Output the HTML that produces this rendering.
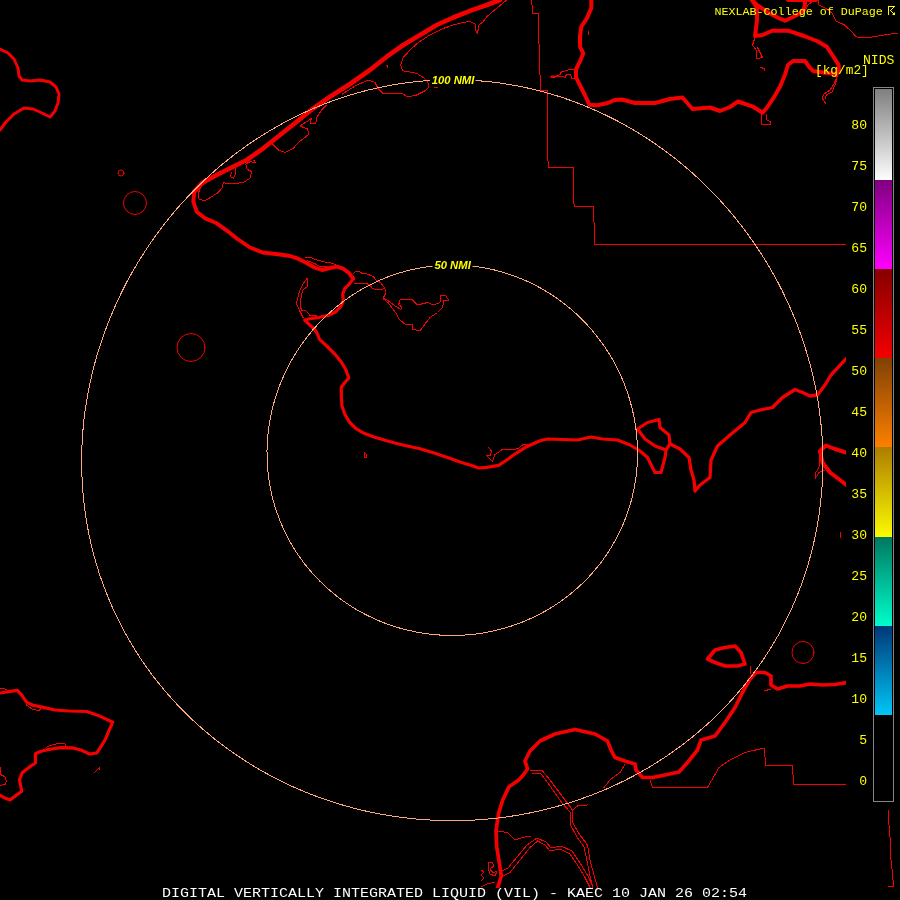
<!DOCTYPE html>
<html><head><meta charset="utf-8"><title>NEXLAB VIL KAEC</title>
<style>
html,body{margin:0;padding:0;background:#000;}
body{width:900px;height:900px;overflow:hidden;position:relative;}
svg{position:absolute;left:0;top:0;display:block;}
</style></head><body>
<svg width="900" height="900" viewBox="0 0 900 900">
<defs>
<clipPath id="mapclip"><path d="M0,0H900V50H846V808H900V888H0Z"/></clipPath>

<linearGradient id="g0" x1="0" y1="0" x2="0" y2="1"><stop offset="0" stop-color="rgb(128,128,128)"/><stop offset="1" stop-color="rgb(255,255,255)"/></linearGradient>
<linearGradient id="g1" x1="0" y1="0" x2="0" y2="1"><stop offset="0" stop-color="rgb(128,0,128)"/><stop offset="1" stop-color="rgb(255,0,255)"/></linearGradient>
<linearGradient id="g2" x1="0" y1="0" x2="0" y2="1"><stop offset="0" stop-color="rgb(134,0,0)"/><stop offset="1" stop-color="rgb(244,0,0)"/></linearGradient>
<linearGradient id="g3" x1="0" y1="0" x2="0" y2="1"><stop offset="0" stop-color="rgb(128,66,6)"/><stop offset="1" stop-color="rgb(255,128,0)"/></linearGradient>
<linearGradient id="g4" x1="0" y1="0" x2="0" y2="1"><stop offset="0" stop-color="rgb(174,126,0)"/><stop offset="1" stop-color="rgb(252,252,0)"/></linearGradient>
<linearGradient id="g5" x1="0" y1="0" x2="0" y2="1"><stop offset="0" stop-color="rgb(0,120,96)"/><stop offset="1" stop-color="rgb(0,255,204)"/></linearGradient>
<linearGradient id="g6" x1="0" y1="0" x2="0" y2="1"><stop offset="0" stop-color="rgb(0,56,120)"/><stop offset="1" stop-color="rgb(0,200,248)"/></linearGradient>
</defs>
<rect width="900" height="900" fill="#000"/>
<g clip-path="url(#mapclip)" fill="none" stroke="#f40000" stroke-linejoin="round" stroke-linecap="round">
<polyline stroke-width="3" points="0,49 8,53 14,59 18,68 19,76 22,80 30,81 40,80 50,82 56,87 59,94 58,103 55,111 50,117 42,113 33,109 24,108 14,114 6,122 0,130"/>
<polyline stroke-width="3.2" points="353.3,278.7 348.7,284.7 344.7,288.7 342.7,294 343.3,300.7 340.7,306.7 335.3,312 328.7,315.3 319.3,317.3 310,318.7 304.7,320 308.7,324 314,328.7 317,333 319.5,339.3 326.7,346 334.7,354 341.3,362 346,370 348.7,378 345.3,382 341.3,387.3 341.3,396.7 342,406 344.7,414 349.3,422 356,428.7 364,433.3 374.7,437.3 386.7,440.7 398.7,444 410.7,446.7 420,448.7 433.3,452.7 446.7,457.3 460,462 470.7,465.3 478.7,468 486.7,467.3 498.7,465.3 506.7,460 516,453.3 526.7,446.7 540,440.7 547.5,439 562.5,439.5 577.5,440 591,437 602.5,439 617.5,440 630,445 640,451 647.5,457.5 655,472.5 661,472.5 665,457.5 666,450 655,446 645,439 637.5,429 647.5,422.5 659,419.5 660,427.5 669,435 670,444 666,450"/>
<polyline stroke-width="3.3" points="670,444 680,449 689,457.5 691,470 694,480 695,491 700,485 710,477.5 711,460 717.5,446 730,435 745,422.5 751,412.5 760,410 772.5,407.5 782.5,397.5 795,389.5 802.5,392.5 810,396 817.5,395 825,385 831,375 845,360 850,355"/>
<polyline stroke-width="4" points="591.3,0 591.3,8 586.7,18.7 581.3,26.7 580,36 580,46.7 583.3,53.3 580,61.3 576,69.3 576,77.3 580,85.3 585.3,96 589.3,104.7 597.3,105.3 606.7,103.3 614.7,100 622,99.5 635,103 655,103 670,99 682.5,97.5 692.5,109 710,107.5 720,111 730,107 738,101.5 753,106.7 762.7,112.7 766.7,108 773,98.7 780,86.7 785,74.7 788,65 793,61 805,61 809,66.7 813,71 825,72.7 836,74 839,72 838.7,65 833,56 826.7,46.7 817,41 804,36 788,30.7 772,30.7 762.7,35 755,36 757,20 757,8 752,0"/>
<polyline stroke-width="2.5" points="551.5,76.7 554.5,76.7"/>
<polyline stroke-width="4" points="752,0 757,5 769,13 780,18.7 785,20.7 793,17 802.7,12 805,5 805,1"/>
<polyline stroke-width="4" points="788,0 816,0"/>
<polyline stroke-width="4" points="850,453 846,452.5 835,449 826,445.5 820,451 822.5,462.5 830,472.5 840,480 850,488"/>
<polyline stroke-width="3.2" points="0,693 8.7,691.6 17.3,690.4 21.7,695.2 26.7,702.4 33.2,705.3 43.3,707.4 54.9,710 69.3,711 86.7,711.5 98.2,715.4 112.7,722.2 109,730.6 105.4,739.2 101.1,746.4 96.8,753 89.6,754 80.9,750 72.2,747.9 60.7,747.6 49.1,749.3 40.4,751.5 35.4,753.7 35.4,763 28.9,767.4 22.4,772.4 19.5,779.7 21.7,791.2 15.9,795.6 10.1,799.9 4.3,797.7 -1,794.8"/>
<polyline stroke-width="3.7" points="497,892 497.5,888 501.3,876 499.3,862.7 496.7,846.7 496,830.7 498.7,813 502.7,800 509,786.7 518.7,780 522.5,776 527.5,769 525,761 530,751 540,741 555,734 575,729.5 595,734 607.5,741 611,750 615,757.5 625,761 635,764 636,770 642.5,777.5 652.5,777.5 665,775 679,772 687.5,762.5 697.5,750 701,740 715,736 725,722.5 735,707.5 742.5,692.5 750,679 756,672.5 765,672.5 771,676 771,685 777.5,689 787.5,686 800,686 810,684 822.5,685 835,684.5 850,682"/>
<polyline stroke-width="3.7" points="707.5,659 715,650 725,647.5 735,646 741,652.5 745,664 737.5,666 725,666 715,662.5 707.5,659"/>
<polyline stroke-width="3.9" points="194.2,191.7 193.3,201.7 196.7,211.7 205,218.3 216.7,223.3 228.3,231.7 237.5,239 250,247.5 262.5,252.5 280,254.5 290,256 298,258.7 306,262.7 314,267.3 322,270 330,268 336.7,266.7 343.3,268.7 348.7,272.7 353.3,278.7"/>
<g stroke-width="4.6">
<polyline points="500,0 486.7,5 470,10.8 453.3,17.5 436.7,25 420,35 403.3,45 386.7,56.7 370,70 350,84 330,96.7 313.3,108.3 296.7,121.7 280,135 263.3,148.3 246.7,160 230,168.3 213.3,176.7 201.7,183.3 194.2,191.7"/>
</g>
<g stroke-width="1" shape-rendering="crispEdges">
<polyline points="531.5,0 531.5,5 532.5,5 532.5,13.5 538.5,13.5 538.5,44 539.5,44 539.5,75 540.5,75 540.5,90.5 547.5,90.5 547.5,161 548.5,161 548.5,167.5 573.5,167.5 573.5,204 574.5,204 574.5,206.5 593.5,206.5 593.5,222 594.5,222 594.5,244.5 850,244.5"/>
<polyline points="650,780 652.5,787.5 707.5,787.5 719,767.5 730,760 745,752.5 764,748 766,765.5 792.5,765.5 793.5,784.5 850,784.5"/>
<polyline points="813,1 808,5 805,10.7"/>
<polyline points="818.7,0 818.7,5 825,8 832,13 836,21 844,24.7 850.7,30.7 856,36.7 862,38 872,37 884,35 898,33"/>
<polyline points="201.7,185 198.3,193.3 199,199 205,200.8 211.7,196.7 218.3,192.5 222.5,187.5 223.3,182.5 228.3,184 236.7,183.3 243.3,182.5 250,178.3 251.7,171.7 246.7,169 245.8,164 250,161.7 255.8,162.5 253.3,160"/>
<polyline points="235,168.3 235.8,173.3 233.3,178.3 230,176.7 231.7,172.5"/>
<polyline points="272.5,144 278.3,150 285,152.5 293.3,148.3 298.3,142.5 305,137.5 309,134 307.5,129 300,126 306.7,121.7 311.7,118.3 310,123.3 315.8,124 316.7,117.5 321.7,110 326.7,105"/>
<polyline points="506.7,0 496.7,8.3 486.7,16.7 483.3,21.7 479,25 477.5,33.3 475,29 475,24 470,21.3 463.3,22.5 453.3,25 441.7,29 428.3,36 418.3,42.5 410,50 403.3,57.5 400.8,65 402.5,70.8 408.3,71.7 416.7,73.3 423.3,77.5 427.5,81.7 429,86.7 425,90.8 420,93.3 415,95.8 406.7,96.3 401.7,93.3 393.3,93.7 383.3,94 378.3,89 375,82.5 368,80 355,86 342.5,94"/>
<polyline points="386.7,65 388,67.5"/>
<polyline points="434,87.5 437.5,87.5"/>
<polyline points="353.3,274 355.3,271.3 359.3,271.3 362,273.3 367.3,274 373.3,276.7 376,280 380.7,282.7 384.7,288 386,292.7 383.3,298 387.3,300 391.3,303.3 395.3,306 400.7,309.3 402,307.3 398.7,304.7 400,300 404.7,299 412.5,300 417.5,305 427.5,302.5 434,305 440,302.5 441,295 446,296 449,301 444,300 442.5,307.5 437.5,312.5 430,317.5 425,324 420,331 412.5,329 412.5,325 404.7,324 399.3,319.3 396.7,314 392.7,308.7 388.7,303.3 383.3,298.7"/>
<polyline points="307.3,278 303.3,283.3 300,290 298,296.7 296.4,303.3 299.3,310 303.3,318"/>
<polyline points="308,279.3 307.3,286.7 302.7,290 301.3,296.7 300,303.3 301.3,310 306,310.7 310,315.3 316.7,316"/>
<polyline points="304.7,258 310,257.3 316.7,260 324.7,262 330,262.7 334,264 337,266"/>
<polyline points="307.3,260.7 314,263.3 320.7,266.7 327.3,266.7"/>
<polyline points="354,283.3 359.3,284 366,283.3 370,285.3 372.7,288.7 378,290 384,288.7"/>
<polyline points="364,452 366,454 366,458 364,457 364,452"/>
<polyline points="488,446.7 491.3,450.7 490.7,456 486.7,455.3 489.3,458.7 492.7,461.3 494.7,454.7 502.7,449.3 513.3,450 518.7,448 522.7,444.7 529.3,444"/>
<polyline points="755,37.5 752.5,45 756,50 756,59 762.5,57.5 757.5,47.5"/>
<polyline points="760,67 765,69 764,71"/>
<polyline points="838,74 834,84 830,90 824,94 822,98 826,104"/>
<polyline points="837,78.7 835,85 832,92 826.7,94.7 825,98.7"/>
<polyline points="762,114 761,124 770,125 771,122 767,120 766,114"/>
<polyline points="820,455 819,467.5 815,474 815,479 819,472.5 825,470"/>
<polyline points="840,532 840,538"/>
<polyline points="0,766.7 0.7,774.6 5,776.8 6.5,781.1 5,784.7 0,785.2"/>
<polyline points="94.6,772.4 99.7,767.4 99.7,769.5"/>
<polyline points="530,770 542.5,771 550,780 557.5,790 565,800 572.5,810 572.5,822.5 580,835 587.5,845 590,860 594,875 597.5,887.5"/>
<polyline points="532,773 541,774 548,783 555,793 562,803 570,812 570,824 577,837 584,847 587,861 590,876 593,888"/>
<polyline points="572.5,810 577.5,806 587.5,805"/>
<polyline points="500,877.5 510,872.5 520,860 530,847.5 537.5,841 545,845 550,851 560,849 570,854 577.5,865 585,877.5 590,887.5"/>
<polyline points="500,872 508,868 517,857 527,845 537,838 546,842 551,848 561,846 572,851 580,863 588,876 593,887"/>
<polyline points="497.5,831 507.5,832.5 515,840 522.5,837.5 531,836"/>
<polyline points="625,764 620,772.5 610,780 604,787.5"/>
<polyline points="764,691 771,689"/>
<polyline points="750,666 751,674"/>
<polyline points="555,76.5 560,74.7 561.3,72 568,70 574,69.3"/>
<polyline points="555,77 560,76 565.3,77.3 566.7,74 570.7,74.7 572,78.7 575.3,78"/>
<polyline points="588,30.7 588,34.7"/>
<polyline points="488,863 492,862 494,866 490,869 493,873 497,871 495,876 490,874 488,868 488,863"/>
<polyline points="481,870 484,872 481,875 484,878 481,881"/>
<polyline points="481,887 487,884 495,882"/>
<polyline points="46.2,747.2 53.4,744.3 62.1,743.3 65.7,744.3 65.7,747.2"/>
<polyline points="26,704.6 31.8,708.9 39,711 40.4,708.9"/>
<polyline points="0,689 4,688.5 7,690"/>
</g>
<g stroke-width="1">
<circle cx="121" cy="173" r="3"/>
<circle cx="135" cy="203" r="11.5"/>
<circle cx="191" cy="347.5" r="14"/>
<circle cx="803" cy="652.5" r="11"/>
</g>
</g>
<g fill="none" stroke="#f40000" stroke-width="1" shape-rendering="crispEdges">
<polyline points="888,810 889,825 890.5,842.5 891,860 892.5,873 893.5,886 888,887"/>
</g>
<g fill="none" stroke="#ffa87e" stroke-width="1" shape-rendering="crispEdges">
<polygon points="452.3,79.8 461.7,79.9 471.1,80.3 480.4,80.9 489.8,81.8 499.1,82.9 508.4,84.3 517.7,86 527,87.9 536.1,90 545.3,92.4 554.4,95 563.4,97.9 572.3,101 581.2,104.4 590,108 598.7,111.8 607.3,115.9 615.8,120.1 624.2,124.7 632.5,129.4 640.7,134.4 648.8,139.5 656.7,144.9 664.6,150.5 672.3,156.3 679.8,162.3 687.2,168.5 694.5,174.9 701.5,181.5 708.5,188.3 715.3,195.2 721.9,202.3 728.3,209.6 734.6,217.1 740.6,224.7 746.5,232.5 752.2,240.4 757.7,248.5 763,256.7 768.1,265 773,273.5 777.7,282 782.2,290.7 786.4,299.6 790.5,308.5 794.3,317.5 797.9,326.6 801.2,335.8 804.3,345 807.2,354.3 809.9,363.7 812.3,373.2 814.5,382.7 816.4,392.3 818.1,401.9 819.5,411.5 820.7,421.2 821.6,430.8 822.3,440.5 822.7,450.2 822.9,459.9 822.8,469.6 822.5,479.3 821.9,489 821,498.6 819.9,508.2 818.6,517.7 817,527.3 815.1,536.7 813,546.1 810.6,555.4 808,564.7 805.1,573.9 802,583 798.6,592 795,600.9 791.1,609.7 787,618.4 782.6,627 778.1,635.5 773.3,643.8 768.2,652 762.9,660.1 757.4,668 751.7,675.8 745.8,683.4 739.6,690.8 733.3,698.1 726.7,705.2 720,712.2 713,719 705.9,725.5 698.5,731.9 691,738.1 683.3,744.1 675.5,749.9 667.5,755.5 659.3,760.9 650.9,766.1 642.5,771.1 633.8,775.8 625.1,780.3 616.2,784.6 607.2,788.7 598.1,792.5 588.9,796.1 579.5,799.4 570.1,802.6 560.6,805.4 551,808.1 541.4,810.5 531.6,812.6 521.8,814.5 512,816.1 502.1,817.5 492.2,818.7 482.2,819.5 472.3,820.2 462.3,820.6 452.3,820.7 442.3,820.6 432.3,820.2 422.3,819.5 412.4,818.7 402.4,817.5 392.5,816.1 382.7,814.5 372.9,812.6 363.2,810.5 353.5,808.1 343.9,805.4 334.4,802.6 325,799.4 315.7,796.1 306.4,792.5 297.3,788.7 288.3,784.6 279.4,780.3 270.7,775.8 262.1,771.1 253.6,766.1 245.3,760.9 237.1,755.5 229.1,749.9 221.2,744.1 213.5,738.1 206,731.9 198.7,725.5 191.5,719 184.6,712.2 177.8,705.2 171.3,698.1 164.9,690.8 158.8,683.4 152.8,675.8 147.1,668 141.6,660.1 136.3,652 131.3,643.8 126.5,635.5 121.9,627 117.5,618.4 113.4,609.7 109.6,600.9 106,592 102.6,583 99.4,573.9 96.6,564.7 93.9,555.4 91.6,546.1 89.4,536.7 87.6,527.3 86,517.7 84.6,508.2 83.5,498.6 82.6,489 82.1,479.3 81.7,469.6 81.6,459.9 81.8,450.2 82.2,440.5 82.9,430.8 83.8,421.2 85,411.5 86.5,401.9 88.1,392.3 90.1,382.7 92.2,373.2 94.7,363.7 97.3,354.3 100.2,345 103.3,335.8 106.7,326.6 110.3,317.5 114.1,308.5 118.1,299.6 122.4,290.7 126.8,282 131.5,273.5 136.4,265 141.5,256.7 146.8,248.5 152.3,240.4 158,232.5 163.9,224.7 170,217.1 176.2,209.6 182.7,202.3 189.3,195.2 196.1,188.3 203,181.5 210.1,174.9 217.3,168.5 224.7,162.3 232.3,156.3 240,150.5 247.8,144.9 255.7,139.5 263.8,134.4 272,129.4 280.3,124.7 288.7,120.1 297.2,115.9 305.9,111.8 314.6,108 323.3,104.4 332.2,101 341.2,97.9 350.2,95 359.3,92.4 368.4,90 377.6,87.9 386.8,86 396.1,84.3 405.4,82.9 414.7,81.8 424.1,80.9 433.5,80.3 442.9,79.9"/>
<polygon points="452.3,265 459.4,265.1 466.6,265.6 473.7,266.3 480.8,267.3 487.9,268.6 494.9,270.1 501.8,272 508.7,274.1 515.4,276.4 522.1,279.1 528.7,282 535.2,285.2 541.6,288.6 547.8,292.3 553.9,296.2 559.8,300.4 565.6,304.8 571.2,309.4 576.6,314.2 581.8,319.3 586.9,324.5 591.7,329.9 596.3,335.6 600.8,341.4 605,347.3 608.9,353.4 612.7,359.7 616.2,366.1 619.4,372.7 622.4,379.3 625.1,386.1 627.6,393 629.8,400 631.7,407 633.4,414.1 634.8,421.3 635.9,428.5 636.7,435.7 637.2,443 637.5,450.2 637.5,457.5 637.2,464.8 636.6,472 635.7,479.2 634.5,486.4 633,493.5 631.3,500.5 629.3,507.5 627,514.3 624.4,521.1 621.6,527.8 618.5,534.3 615.1,540.7 611.5,547 607.6,553.1 603.5,559.1 599.1,564.9 594.5,570.5 589.7,576 584.7,581.2 579.4,586.2 574,591.1 568.3,595.7 562.5,600.1 556.5,604.2 550.3,608.2 544,611.8 537.5,615.3 530.9,618.4 524.2,621.4 517.3,624 510.4,626.4 503.3,628.5 496.2,630.3 489,631.9 481.7,633.2 474.4,634.2 467,634.9 459.7,635.3 452.3,635.5 444.9,635.3 437.5,634.9 430.2,634.2 422.9,633.2 415.6,631.9 408.4,630.3 401.2,628.5 394.2,626.4 387.2,624 380.4,621.4 373.6,618.4 367,615.3 360.5,611.8 354.2,608.2 348,604.2 342,600.1 336.2,595.7 330.6,591.1 325.1,586.2 319.9,581.2 314.8,576 310,570.5 305.4,564.9 301.1,559.1 296.9,553.1 293.1,547 289.4,540.7 286.1,534.3 283,527.8 280.1,521.1 277.6,514.3 275.3,507.5 273.2,500.5 271.5,493.5 270.1,486.4 268.9,479.2 268,472 267.4,464.8 267.1,457.5 267,450.2 267.3,443 267.8,435.7 268.7,428.5 269.8,421.3 271.1,414.1 272.8,407 274.7,400 276.9,393 279.4,386.1 282.2,379.3 285.1,372.7 288.4,366.1 291.9,359.7 295.6,353.4 299.6,347.3 303.8,341.4 308.2,335.6 312.8,329.9 317.7,324.5 322.7,319.3 328,314.2 333.4,309.4 339,304.8 344.8,300.4 350.7,296.2 356.8,292.3 363,288.6 369.3,285.2 375.8,282 382.4,279.1 389.1,276.4 395.9,274.1 402.7,272 409.7,270.1 416.7,268.6 423.7,267.3 430.8,266.3 438,265.6 445.1,265.1"/>
</g>
<rect x="430" y="74" width="45.5" height="12" fill="#000"/>
<rect x="432.5" y="259" width="40" height="12" fill="#000"/>
<g opacity="0.999">
<g font-family="'Liberation Sans',sans-serif" font-weight="bold" font-style="italic" font-size="11.3px" fill="#ff0" text-anchor="middle">
<text x="453" y="83.5">100 NMI</text>
<text x="452.6" y="269">50 NMI</text>
</g>
<rect x="873.5" y="87.5" width="20" height="714" fill="#000" stroke="#868686" stroke-width="1" shape-rendering="crispEdges"/>
<rect x="875" y="89" width="17" height="91" fill="url(#g0)" shape-rendering="crispEdges"/>
<rect x="875" y="180" width="17" height="89" fill="url(#g1)" shape-rendering="crispEdges"/>
<rect x="875" y="269" width="17" height="89" fill="url(#g2)" shape-rendering="crispEdges"/>
<rect x="875" y="358" width="17" height="89" fill="url(#g3)" shape-rendering="crispEdges"/>
<rect x="875" y="447" width="17" height="90" fill="url(#g4)" shape-rendering="crispEdges"/>
<rect x="875" y="537" width="17" height="89" fill="url(#g5)" shape-rendering="crispEdges"/>
<rect x="875" y="626" width="17" height="89" fill="url(#g6)" shape-rendering="crispEdges"/>
<g font-family="'Liberation Mono',monospace" fill="#ff0">
<text x="714.5" y="15" font-size="11.7px">NEXLAB-College of DuPage</text>
<path d="M888.5,14.5V6.5H894.5L890.5,10.5L894.5,14.5" fill="none" stroke="#ff0" stroke-width="1" shape-rendering="crispEdges"/><path d="M895,12V15H892Z" fill="#ff0"/>
<g font-size="13.1px">
<text x="863" y="64">NIDS</text>
<text x="815" y="74" font-size="12.8px">[kg/m2]</text>
<text x="867" y="785.0" text-anchor="end">0</text>
<text x="867" y="744.0" text-anchor="end">5</text>
<text x="867" y="703.0" text-anchor="end">10</text>
<text x="867" y="662.0" text-anchor="end">15</text>
<text x="867" y="621.0" text-anchor="end">20</text>
<text x="867" y="580.0" text-anchor="end">25</text>
<text x="867" y="539.0" text-anchor="end">30</text>
<text x="867" y="498.0" text-anchor="end">35</text>
<text x="867" y="457.0" text-anchor="end">40</text>
<text x="867" y="416.0" text-anchor="end">45</text>
<text x="867" y="375.0" text-anchor="end">50</text>
<text x="867" y="334.0" text-anchor="end">55</text>
<text x="867" y="293.0" text-anchor="end">60</text>
<text x="867" y="252.0" text-anchor="end">65</text>
<text x="867" y="211.0" text-anchor="end">70</text>
<text x="867" y="170.0" text-anchor="end">75</text>
<text x="867" y="129.0" text-anchor="end">80</text>
</g></g>
<text transform="translate(162,897) scale(1.25,1)" font-family="'Liberation Mono',monospace" font-size="12px" fill="#fff">DIGITAL VERTICALLY INTEGRATED LIQUID (VIL) - KAEC 10 JAN 26 02:54</text>
</g>
</svg></body></html>
